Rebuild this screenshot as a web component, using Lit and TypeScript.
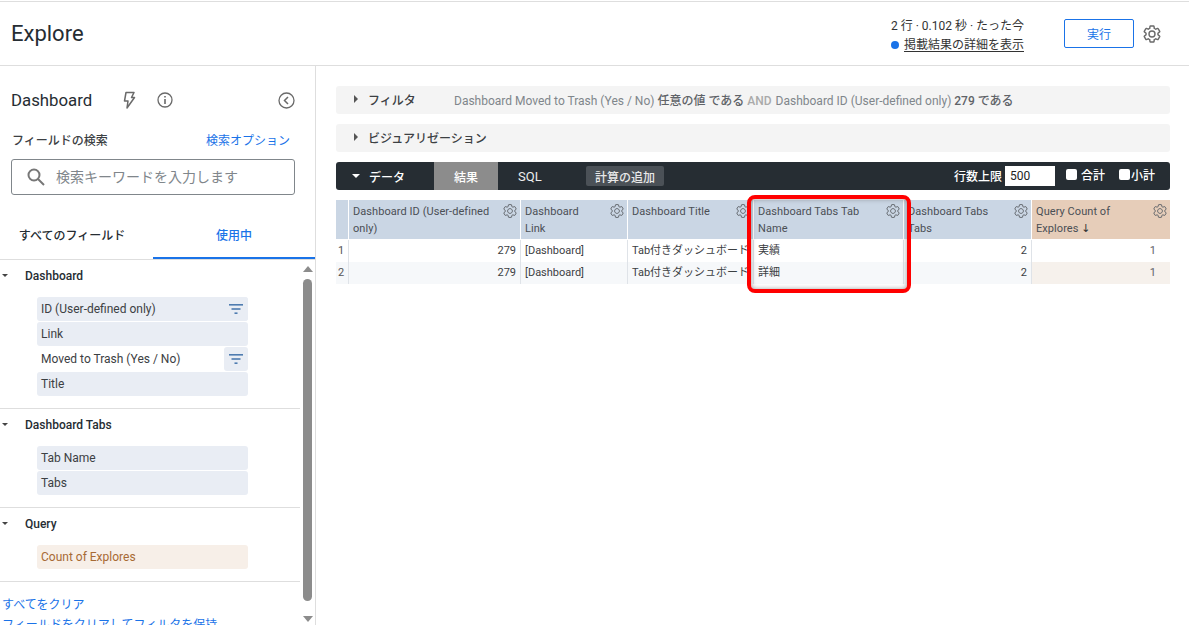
import { LitElement, css, html } from "lit";
import { customElement } from "lit/decorators.js";

const gear = (size: number, sw = 1.4) => html`<svg class="gear" width=${size} height=${size} viewBox="0 0 24 24" fill="none" stroke="currentColor" stroke-width=${sw}><path d="M19.14 12.94c.04-.3.06-.61.06-.94 0-.32-.02-.64-.07-.94l2.03-1.58c.18-.14.23-.41.12-.61l-1.92-3.32c-.12-.22-.37-.29-.59-.22l-2.39.96c-.5-.38-1.03-.7-1.62-.94l-.36-2.54c-.04-.24-.24-.41-.48-.41h-3.84c-.24 0-.43.17-.47.41l-.36 2.54c-.59.24-1.13.57-1.62.94l-2.39-.96c-.22-.08-.47 0-.59.22L2.74 8.87c-.12.21-.08.47.12.61l2.03 1.58c-.05.3-.09.63-.09.94s.02.64.07.94l-2.03 1.58c-.18.14-.23.41-.12.61l1.92 3.32c.12.22.37.29.59.22l2.39-.96c.5.38 1.03.7 1.62.94l.36 2.54c.05.24.24.41.48.41h3.84c.24 0 .44-.17.47-.41l.36-2.54c.59-.24 1.13-.56 1.62-.94l2.39.96c.22.08.47 0 .59-.22l1.92-3.32c.12-.22.07-.47-.12-.61l-2.01-1.58zM12 15.6c-1.98 0-3.6-1.62-3.6-3.6s1.62-3.6 3.6-3.6 3.6 1.62 3.6 3.6-1.62 3.6-3.6 3.6z"/></svg>`;

const filterIcon = html`<svg width="16" height="12" viewBox="0 0 16 12" fill="#4f7cb0"><rect x="1" y="1" width="14" height="1.6"/><rect x="3.500" y="5.200" width="9" height="1.6"/><rect x="6.500" y="9.400" width="3" height="1.6"/></svg>`;

const caretDown = html`<span class="caret-down"></span>`;
const caretRight = html`<span class="caret-right"></span>`;

interface Field { label: string; filter?: "row" | "icon"; measure?: boolean }
interface Group { name: string; fields: Field[] }

const groups: Group[] = [
  {
    name: "Dashboard",
    fields: [
      { label: "ID (User-defined only)", filter: "row" },
      { label: "Link" },
      { label: "Moved to Trash (Yes / No)", filter: "icon" },
      { label: "Title" },
    ],
  },
  { name: "Dashboard Tabs", fields: [{ label: "Tab Name" }, { label: "Tabs" }] },
  { name: "Query", fields: [{ label: "Count of Explores", measure: true }] },
];

const columns = [
  { label: "Dashboard ID (User-defined only)" },
  { label: "Dashboard Link" },
  { label: "Dashboard Title" },
  { label: "Dashboard Tabs Tab Name" },
  { label: "Dashboard Tabs Tabs" },
  { label: "Query Count of Explores", measure: true },
];

const rows = [
  ["279", "[Dashboard]", "Tab付きダッシュボード", "実績", "2", "1"],
  ["279", "[Dashboard]", "Tab付きダッシュボード", "詳細", "2", "1"],
];

@customElement("app-root")
export class AppRoot extends LitElement {
  static styles = css`
    :host {
      display: block;
      height: 625px;
      overflow: hidden;
      background: #fff;
      color: #262d33;
      font-family: Roboto, "Noto Sans CJK JP", sans-serif;
      font-size: 12px;
    }
    .top {
      display: flex;
      align-items: center;
      height: 63px;
      margin-top: 1px;
      border-top: 1px solid #dedede;
      border-bottom: 1px solid #dedede;
      padding: 0 27px 0 11px;
    }
    .top h1 {
      margin: 0;
      flex: 1;
      font-size: 22px;
      font-weight: 400;
      color: #262d33;
    }
    .status {
      font-size: 12px;
      line-height: 19px;
      margin: 4px 40px 0 0;
      color: #333;
    }
    .status .dot {
      display: inline-block;
      width: 8px;
      height: 8px;
      border-radius: 50%;
      background: #1a73e8;
      margin-right: 5px;
    }
    .status u { text-underline-offset: 2px; }
    .run {
      width: 70px;
      height: 29px;
      box-sizing: border-box;
      border: 1px solid #1a73e8;
      border-radius: 2px;
      background: #fff;
      color: #1a73e8;
      font: inherit;
      font-size: 12px;
      padding: 0;
      margin: 0 8px 0 0;
    }
    .top .gear { color: #6a6a6a; }
    .body { display: flex; height: 559px; }

    .side {
      width: 315px;
      flex: none;
      border-right: 1px solid #dedede;
      display: flex;
      flex-direction: column;
      overflow: hidden;
    }
    .side-head {
      display: flex;
      align-items: center;
      height: 20px;
      margin: 24px 20px 0 11px;
    }
    .side-head .title { font-size: 16.800px; width: 110px; }
    .side-head .info { margin-left: 20px; flex: 1; display: flex; }
    .side-head svg { display: block; }
    .search-label {
      display: flex;
      justify-content: space-between;
      margin: 22px 25px 0 12px;
      line-height: 18px;
      font-weight: 500;
      color: #3c4043;
    }
    .search-label a { color: #1a73e8; font-weight: 400; }
    .search {
      display: flex;
      align-items: center;
      gap: 11px;
      height: 34px;
      margin: 9px 20px 0 11px;
      padding-left: 15px;
      border: 1px solid #80868b;
      border-radius: 3px;
      color: #80868b;
      font-size: 14px;
    }
    .search span { padding-bottom: 2px; }
    .tabs { display: flex; height: 48px; margin-top: 16px; border-bottom: 1px solid #dedede; }
    .tabs div {
      flex: 1;
      display: flex;
      align-items: center;
      justify-content: center;
      font-weight: 500;
      color: #262d33;
      padding-bottom: 2px;
    }
    .tabs div:first-child { padding-right: 9px; }
    .tabs .on {
      color: #1a73e8;
      box-shadow: inset 0 -2px 0 #1a73e8;
      flex: none;
      width: 162px;
    }
    .tree-wrap { display: flex; flex: 1; min-height: 0; }
    .tree { width: 300px; flex: none; }
    .group { padding: 7px 0 11px; border-bottom: 1px solid #dedede; }
    .group-head {
      display: flex;
      align-items: center;
      height: 17px;
      font-weight: 500;
      padding-left: 2px;
      margin-bottom: 13px;
    }
    .group-head .caret-down {
      margin-right: 17px;
      border-top: 3px solid #444;
      border-left-width: 3.500px;
      border-right-width: 3.500px;
    }
    .field {
      display: flex;
      align-items: center;
      justify-content: space-between;
      width: 211px;
      height: 24px;
      margin: 0 0 1px 37px;
      padding-left: 4px;
      box-sizing: border-box;
      border-radius: 3px;
      background: #e9edf4;
      color: #3c4043;
    }
    .field.plain { background: none; }
    .field.measure { background: #f7efe8; color: #a76a34; }
    .field .fi {
      width: 24px;
      height: 24px;
      display: flex;
      align-items: center;
      justify-content: center;
      border-radius: 3px;
      background: #e9edf4;
    }
    .links { padding: 13px 0 0 2px; color: #1a73e8; line-height: 20px; white-space: nowrap; }
    .scroll { width: 15px; display: flex; flex-direction: column; padding-left: 3px; box-sizing: border-box; }
    .bar { width: 9px; height: 322px; border-radius: 5px; background: #8c8c8c; margin: 7px 0 15px; flex: none; }
    .up, .down { width: 0; height: 0; border: 5px solid transparent; flex: none; }
    .up { border-bottom: 6px solid #8c8c8c; border-top: 0; margin-top: 6px; }
    .down { border-top: 6px solid #8c8c8c; border-bottom: 0; }

    .main { flex: 1; padding: 20px 19px 0 20px; min-width: 0; position: relative; }
    .panel {
      display: flex;
      align-items: center;
      height: 28px;
      box-sizing: border-box;
      padding: 0 0 2px 18px;
      border-radius: 3px;
      background: #f4f4f4;
      margin-bottom: 10px;
      color: #80868b;
      white-space: nowrap;
    }
    .panel .cap { color: #3c4043; font-weight: 500; margin-left: 10px; }
    .panel .cap.wide { width: 86px; flex: none; }
    .panel strong { font-weight: 500; color: #5f6368; }
    .panel em { font-style: normal; color: #aaa; font-weight: 500; margin-right: 1px; }
    .caret-right, .caret-down { display: inline-block; width: 0; height: 0; flex: none; }
    .caret-right { border-left: 4px solid #555; border-top: 4px solid transparent; border-bottom: 4px solid transparent; }
    .caret-down { border-top: 4px solid #fff; border-left: 4px solid transparent; border-right: 4px solid transparent; }
    .databar {
      display: flex;
      align-items: center;
      height: 28px;
      border-radius: 3px;
      background: #262d33;
      color: #fff;
      font-weight: 500;
      white-space: nowrap;
    }
    .databar .name { display: flex; align-items: center; gap: 9px; width: 98px; box-sizing: border-box; padding-left: 16px; }
    .databar .res { width: 64px; height: 28px; display: flex; align-items: center; justify-content: center; background: #8c8c8c; }
    .databar .sql { width: 88px; box-sizing: border-box; padding-left: 20px; font-size: 13px; font-weight: 400; color: #eee; }
    .databar .calc { height: 20px; width: 78px; display: flex; align-items: center; justify-content: center; border-radius: 2px; background: #4b5157; color: #e8e8e8; }
    .databar .right { margin-left: auto; display: flex; align-items: center; padding-right: 15px; }
    .limit { width: 50px; height: 20px; line-height: 20px; box-sizing: border-box; padding-left: 5px; background: #fff; color: #222; font-weight: 400; margin: 0 11px 0 3px; }
    .check { width: 11px; height: 11px; border-radius: 2px; background: #fff; display: inline-block; }
    .databar .right > span { padding-bottom: 2px; }
    .databar label { display: flex; align-items: center; gap: 4px; margin-bottom: 4px; }
    .databar label + label { margin-left: 14px; gap: 1px; }

    .grid {
      display: grid;
      grid-template-columns: 13px 172px 107px 126px 150px 128px 138px;
      margin-top: 10px;
      color: #3c4043;
    }
    .th {
      height: 40px;
      background: #cad6e4;
      border-right: 1px solid #fff;
      border-bottom: 1px solid #fff;
      box-sizing: border-box;
      padding: 3px 28px 0 4px;
      line-height: 17px;
      font-size: 11px;
      letter-spacing: .06px;
      position: relative;
      color: #4a4f55;
    }
    .th .gear { position: absolute; right: 2px; top: 3px; color: #5f6368; }
    .th.measure { background: #e6cdb9; border-right: 0; }
    .th.blank { padding: 0; }
    .th .sort { font-family: "DejaVu Sans", sans-serif; color: #333; }
    .td {
      height: 22px;
      line-height: 22px;
      font-size: 11px;
      padding: 0 4px;
      box-sizing: border-box;
      border-right: 1px solid #dfe3e8;
      white-space: nowrap;
      overflow: hidden;
    }
    .td.num { text-align: right; }
    .td.idx { padding: 0 0 0 2px; color: #555; }
    .td.alt { background: #f6f8fa; }
    .td.m { border-right: 0; padding-right: 14px; color: #5f6368; }
    .td.m.alt { background: #f6f1ec; }
    .mark {
      position: absolute;
      left: 431px;
      top: 129px;
      width: 164px;
      height: 98px;
      box-sizing: border-box;
      border: 4px solid #f00;
      border-radius: 8px;
      box-shadow: inset 0 0 5px rgba(80, 80, 80, .55);
    }
  `;

  private renderGroup(g: Group) {
    return html`<div class="group">
      <div class="group-head">${caretDown}<span>${g.name}</span></div>
      ${g.fields.map(
        (f) => html`<div class="field ${f.filter === "icon" ? "plain" : ""} ${f.measure ? "measure" : ""}">
          <span>${f.label}</span>
          ${f.filter ? html`<span class="fi">${filterIcon}</span>` : ""}
        </div>`,
      )}
    </div>`;
  }

  render() {
    return html`
      <div class="top">
        <h1>Explore</h1>
        <div class="status">
          <div>2 行 · 0.102 秒 · たった今</div>
          <div><span class="dot"></span><u>掲載結果の詳細を表示</u></div>
        </div>
        <button class="run">実行</button>
        ${gear(20, 1.700)}
      </div>
      <div class="body">
        <div class="side">
          <div class="side-head">
            <span class="title">Dashboard</span>
            <svg width="16" height="18" viewBox="0 0 16 18" fill="none" stroke="#6a6a6a" stroke-width="1.500" stroke-linejoin="round">
              <path d="M5 1.500h8l-2.500 5h3L6 17l1-7H3.500z" />
            </svg>
            <span class="info">
              <svg width="16" height="16" viewBox="0 0 16 16" fill="none" stroke="#6a6a6a" stroke-width="1.300">
                <circle cx="8" cy="8" r="7" />
                <path d="M8 7v5M8 4v1.600" stroke-width="1.600" />
              </svg>
            </span>
            <svg width="17" height="17" viewBox="0 0 17 17" fill="none" stroke="#6a6a6a" stroke-width="1.300">
              <circle cx="8.500" cy="8.500" r="7.500" />
              <path d="M10 5l-3.500 3.500L10 12" stroke-width="1.500" />
            </svg>
          </div>
          <div class="search-label"><span>フィールドの検索</span><a>検索オプション</a></div>
          <div class="search">
            <svg width="18" height="18" viewBox="0 0 18 18" fill="none" stroke="#777" stroke-width="2">
              <circle cx="7" cy="7" r="5.500" />
              <path d="M11 11l6 6" />
            </svg>
            <span>検索キーワードを入力します</span>
          </div>
          <div class="tabs">
            <div>すべてのフィールド</div>
            <div class="on">使用中</div>
          </div>
          <div class="tree-wrap">
            <div class="tree">
              ${groups.map((g) => this.renderGroup(g))}
              <div class="links">
                <div>すべてをクリア</div>
                <div>フィールドをクリアしてフィルタを保持</div>
              </div>
            </div>
            <div class="scroll">
              <div class="up"></div>
              <div class="bar"></div>
              <div class="down"></div>
            </div>
          </div>
        </div>
        <div class="main">
          <div class="panel">
            ${caretRight}
            <span class="cap wide">フィルタ</span>
            <span>Dashboard Moved to Trash (Yes / No) <strong>任意の値 である</strong> <em>AND</em> Dashboard ID (User-defined only) <strong>279 である</strong></span>
          </div>
          <div class="panel">${caretRight}<span class="cap">ビジュアリゼーション</span></div>
          <div class="databar">
            <div class="name">${caretDown}<span>データ</span></div>
            <div class="res">結果</div>
            <div class="sql">SQL</div>
            <div class="calc">計算の追加</div>
            <div class="right">
              <span>行数上限</span>
              <div class="limit">500</div>
              <label><span class="check"></span>合計</label>
              <label><span class="check"></span>小計</label>
            </div>
          </div>
          <div class="grid">
            <div class="th blank"></div>
            ${columns.map(
              (c) => html`<div class="th ${c.measure ? "measure" : ""}">
                ${c.label}${c.measure ? html` <span class="sort">↓</span>` : ""}${gear(16)}
              </div>`,
            )}
            ${rows.map(
              (r, i) => html`
                <div class="td idx ${i ? "alt" : ""}">${i + 1}</div>
                ${r.map((v, j) => {
                  const num = j === 0 || j >= 4;
                  return html`<div class="td ${num ? "num" : ""} ${j === 5 ? "m" : ""} ${i ? "alt" : ""}">${v}</div>`;
                })}
              `,
            )}
          </div>
          <div class="mark"></div>
        </div>
      </div>
    `;
  }
}
